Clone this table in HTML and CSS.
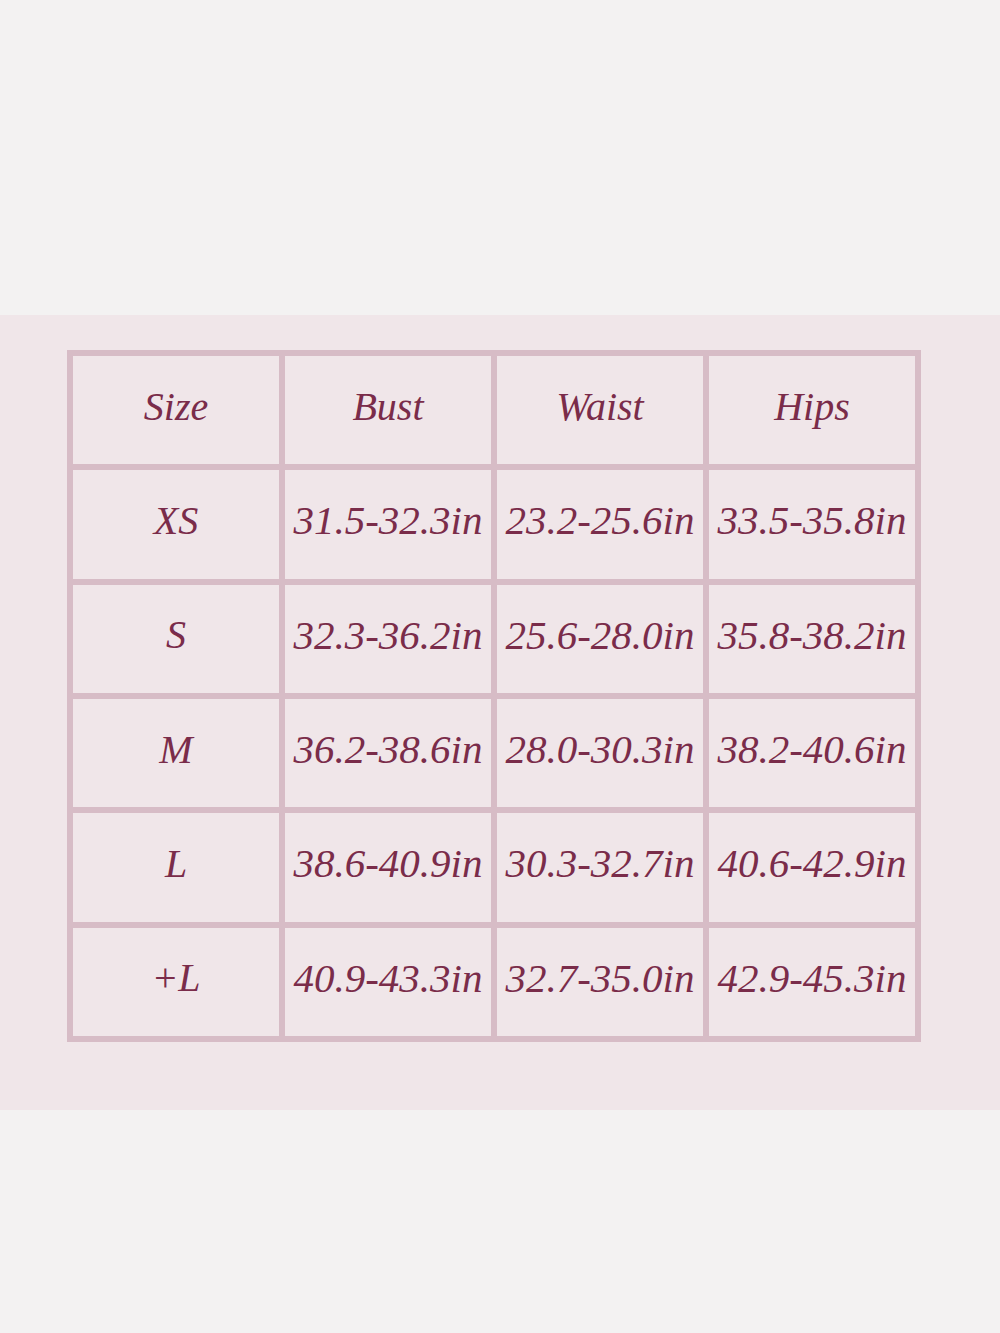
FILE: index.html
```html
<!DOCTYPE html>
<html lang="en">
<head>
<meta charset="utf-8">
<title>Size chart</title>
<link rel="stylesheet" href="styles.css">
</head>
<body>
<div class="band">
  <div class="chart">
    <div class="cell head">Size</div>
    <div class="cell head">Bust</div>
    <div class="cell head">Waist</div>
    <div class="cell head">Hips</div>

    <div class="cell head">XS</div>
    <div class="cell">31.5-32.3in</div>
    <div class="cell">23.2-25.6in</div>
    <div class="cell">33.5-35.8in</div>

    <div class="cell head">S</div>
    <div class="cell">32.3-36.2in</div>
    <div class="cell">25.6-28.0in</div>
    <div class="cell">35.8-38.2in</div>

    <div class="cell head">M</div>
    <div class="cell">36.2-38.6in</div>
    <div class="cell">28.0-30.3in</div>
    <div class="cell">38.2-40.6in</div>

    <div class="cell head">L</div>
    <div class="cell">38.6-40.9in</div>
    <div class="cell">30.3-32.7in</div>
    <div class="cell">40.6-42.9in</div>

    <div class="cell head">+L</div>
    <div class="cell">40.9-43.3in</div>
    <div class="cell">32.7-35.0in</div>
    <div class="cell">42.9-45.3in</div>
  </div>
</div>
</body>
</html>
```
FILE: styles.css
```css
html, body {
  margin: 0;
  padding: 0;
}
body {
  background: #f3f2f2;
  width: 1000px;
  height: 1333px;
  overflow: hidden;
  font-family: "Liberation Serif", "DejaVu Serif", serif;
}
.band {
  margin-top: 315px;
  height: 795px;
  background: #f0e6e9;
  padding: 35px 0 0 67px;
  box-sizing: border-box;
}
.chart {
  width: 854px;
  height: 692px;
  box-sizing: border-box;
  padding: 6px;
  gap: 6px;
  background: #d7bcc6;
  display: grid;
  grid-template-columns: repeat(4, 1fr);
  grid-template-rows: repeat(6, 1fr);
}
.cell {
  background: #f0e6e9;
  display: flex;
  align-items: center;
  justify-content: center;
  font-style: italic;
  color: #7a2c4a;
  font-size: 41px;
  white-space: nowrap;
  padding-bottom: 8px;
  box-sizing: border-box;
}
.cell.head {
  font-size: 40px;
}
```
